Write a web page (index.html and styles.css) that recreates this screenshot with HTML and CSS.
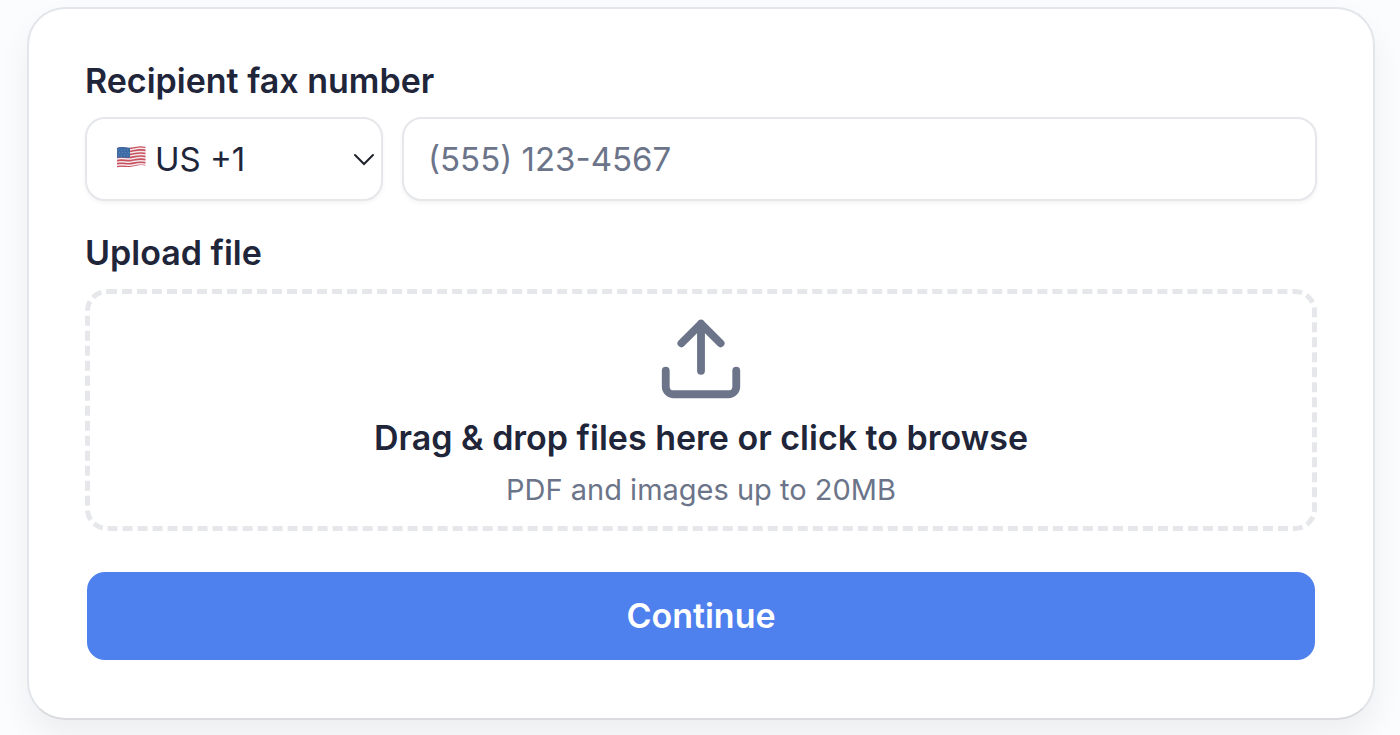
FILE: index.html
```html
<!DOCTYPE html>
<html lang="en">
<head>
<meta charset="utf-8">
<meta name="viewport" content="width=device-width, initial-scale=1">
<title>Send a fax</title>
<link rel="stylesheet" href="styles.css">
</head>
<body>
<form class="card">
  <div class="group">
    <label class="label" for="fax">Recipient fax number</label>
    <div class="phone">
      <div class="country">
        <svg class="flag" viewBox="0 0 30 24" aria-hidden="true">
          <defs><clipPath id="wave"><path d="M1 3C6 .8 10 3.5 15 2.6S24 .3 29.500 1.800V20.500C24 19 20 20.800 15 21.800S6 20.800 1 22.500Z"/></clipPath></defs>
          <g clip-path="url(#wave)">
            <path fill="#f3e9eb" d="M0 0h30v24H0z"/>
            <g fill="none" stroke="#c9505e" stroke-width="1.600">
              <path d="M0 3.500C6 1.300 10 4 15 3.100S24 .8 30 2.300"/>
              <path d="M0 6.600C6 4.400 10 7.100 15 6.200S24 3.900 30 5.400"/>
              <path d="M0 9.700C6 7.500 10 10.200 15 9.300S24 7 30 8.500"/>
              <path d="M0 12.800C6 10.600 10 13.300 15 12.400S24 10.100 30 11.600"/>
              <path d="M0 15.900C6 13.700 10 16.400 15 15.500S24 13.200 30 14.700"/>
              <path d="M0 19C6 16.800 10 19.500 15 18.600S24 16.300 30 17.800"/>
              <path d="M0 22.100C6 19.900 10 22.600 15 21.700S24 19.400 30 20.900"/>
            </g>
            <path fill="#3c6ba5" d="M0 0h14v12.500C9 13.400 6 11.600 0 13Z"/>
            <g stroke="#5f88b8" stroke-width="1" stroke-dasharray="1 2"><path d="M2 5h11M3 7.500h10M2 10h11"/></g>
          </g>
        </svg>
        <select class="field select" aria-label="Country code">
          <option>US +1</option>
        </select>
        <svg class="chevron" viewBox="0 0 22 14" aria-hidden="true"><path d="M2 2l9 9 9-9"/></svg>
      </div>
      <input class="field number" id="fax" type="tel" placeholder="(555) 123-4567">
    </div>
  </div>
  <div class="group">
    <label class="label" for="file">Upload file</label>
    <label class="dropzone">
      <input class="file" id="file" type="file" accept=".pdf,image/*">
      <svg class="upload" viewBox="0 0 24 24" aria-hidden="true"><path d="M21 15v4a2 2 0 0 1-2 2H5a2 2 0 0 1-2-2v-4M17 8l-5-5-5 5M12 3v12"/></svg>
      <span class="title">Drag &amp; drop files here or click to browse</span>
      <span class="hint">PDF and images up to 20MB</span>
    </label>
  </div>
  <button class="submit" type="submit">Continue</button>
</form>
</body>
</html>
```
FILE: styles.css
```css
* {
  box-sizing: border-box;
}

body {
  margin: 0;
  padding: 7px 25px 15px 27px;
  background: #fbfcfe;
  color: #20253a;
  font-family: Inter, "Liberation Sans", sans-serif;
  font-size: 33px;
}

.card {
  padding: 52px 56px 56px;
  border: 2px solid #e2e5e9;
  border-bottom-color: #d9dbde;
  border-radius: 38px;
  background: #fff;
  box-shadow: 0 16px 32px rgba(0, 0, 0, 0.06);
}

.group {
  display: flex;
  flex-direction: column;
  gap: 16px;
  margin-bottom: 32px;
}

.label {
  align-self: flex-start;
  font-size: 34px;
  font-weight: 600;
  line-height: 40px;
}

.phone {
  display: flex;
  gap: 19px;
}

.country {
  position: relative;
  flex: 0 0 298px;
}

.field {
  width: 100%;
  height: 84px;
  border: 2px solid #e5e7eb;
  border-radius: 20px;
  background: #fff;
  box-shadow: 0 2px 4px rgba(0, 0, 0, 0.05);
  color: #20253a;
  font: inherit;
}

.select {
  appearance: none;
  padding: 0 48px 0 68px;
}

.number {
  flex: 1;
  min-width: 0;
  padding: 0 24px;
}

.number::placeholder {
  color: #6b7489;
  opacity: 1;
}

.flag {
  position: absolute;
  top: 28px;
  left: 31px;
  width: 30px;
  height: 24px;
}

.chevron {
  position: absolute;
  top: 36px;
  right: 8px;
  width: 22px;
  height: 14px;
  fill: none;
  stroke: #20222c;
  stroke-width: 2;
  stroke-linecap: round;
  pointer-events: none;
}

.dropzone {
  position: relative;
  display: flex;
  flex-direction: column;
  align-items: center;
  padding: 18px;
  border: 5px dashed #e5e7eb;
  border-radius: 22px;
  text-align: center;
  cursor: pointer;
}

.file {
  position: absolute;
  width: 1px;
  height: 1px;
  opacity: 0;
}

.upload {
  width: 94px;
  height: 94px;
  margin-bottom: 12px;
  fill: none;
  stroke: #6b7489;
  stroke-width: 2;
  stroke-linecap: round;
  stroke-linejoin: round;
}

.title {
  font-size: 34px;
  font-weight: 600;
  line-height: 40px;
}

.hint {
  margin-top: 14px;
  color: #6b7489;
  font-size: 29px;
  line-height: 36px;
}

.submit {
  display: block;
  width: 100%;
  height: 92px;
  margin-top: 39px;
  padding: 0 0 2px;
  border: 2px solid transparent;
  border-radius: 20px;
  background: #4e80ee;
  background-clip: padding-box;
  color: #fff;
  font: inherit;
  font-size: 34px;
  font-weight: 600;
}
```
